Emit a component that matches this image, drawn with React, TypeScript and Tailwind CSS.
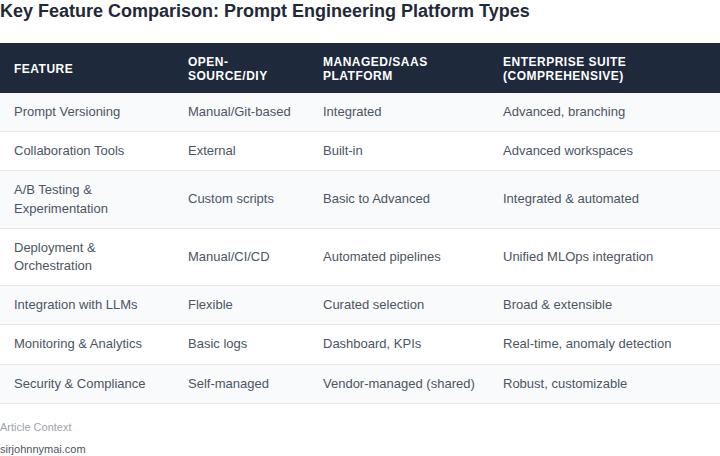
import React from 'react';

const headers = ['Feature', 'Open-Source/DIY', 'Managed/SaaS Platform', 'Enterprise Suite (Comprehensive)'];

const rows = [
  ['Prompt Versioning', 'Manual/Git-based', 'Integrated', 'Advanced, branching'],
  ['Collaboration Tools', 'External', 'Built-in', 'Advanced workspaces'],
  ['A/B Testing & Experimentation', 'Custom scripts', 'Basic to Advanced', 'Integrated & automated'],
  ['Deployment & Orchestration', 'Manual/CI/CD', 'Automated pipelines', 'Unified MLOps integration'],
  ['Integration with LLMs', 'Flexible', 'Curated selection', 'Broad & extensible'],
  ['Monitoring & Analytics', 'Basic logs', 'Dashboard, KPIs', 'Real-time, anomaly detection'],
  ['Security & Compliance', 'Self-managed', 'Vendor-managed (shared)', 'Robust, customizable'],
];

const colWidths = ['w-[174px]', 'w-[135px]', 'w-[180px]', 'w-[231px]'];

export default function App() {
  return (
    <div className="w-[720px] bg-white font-['Liberation_Sans',Arial,sans-serif]">
      <h2 className="text-[18px] leading-[22px] font-bold text-[#1f2937] mb-[21px]">
        Key Feature Comparison: Prompt Engineering Platform Types
      </h2>

      <table className="w-full table-fixed border-collapse">
        <thead>
          <tr className="bg-[#1e293b]">
            {headers.map((h, i) => (
              <th
                key={h}
                className={`${colWidths[i]} px-[14px] pt-[12px] pb-[10px] text-left align-middle text-[12px] leading-[14px] font-bold uppercase tracking-[0.5px] text-white`}
              >
                {h}
              </th>
            ))}
          </tr>
        </thead>
        <tbody>
          {rows.map((r, ri) => (
            <tr key={ri} className={`border-b border-[#e5e7eb] ${ri % 2 === 0 ? 'bg-[#f8fafc]' : 'bg-white'}`}>
              {r.map((c, ci) => (
                <td key={ci} className="px-[14px] py-[10px] align-middle text-[13px] leading-[1.4] text-[#4b5563]">
                  {c}
                </td>
              ))}
            </tr>
          ))}
        </tbody>
      </table>

      <div className="mt-[16px] flex flex-col gap-[8px] text-[11px] leading-[14px]">
        <span className="text-[#9ca3af]">Article Context</span>
        <span className="text-[#4b5563]">sirjohnnymai.com</span>
      </div>
    </div>
  );
}
